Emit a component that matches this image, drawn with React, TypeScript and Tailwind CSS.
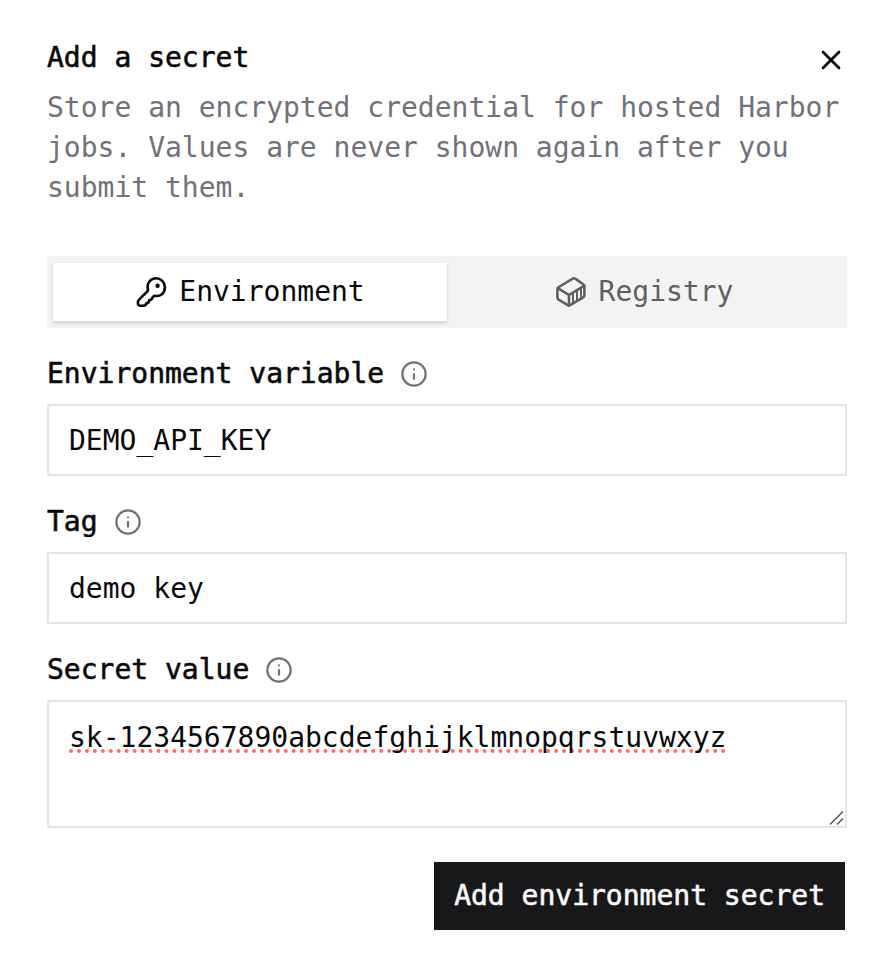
import { useState, type ReactNode } from "react";
import { Info, X } from "lucide-react";
import clsx from "clsx";

const controlClass =
  "block w-full border-2 border-[#e4e4e4] bg-white px-5 text-[28px] leading-10 text-[#09090b] focus:outline-none";

// DejaVu Sans Mono has no medium weight, a thin stroke stands in for it
const mediumClass = "font-medium [-webkit-text-stroke:thin]";

function KeyIcon() {
  return (
    <svg viewBox="0 0 32 32" className="size-8" fill="none" stroke="currentColor" strokeWidth="2.6" strokeLinecap="round" strokeLinejoin="round">
      <path d="M13 14 C11.3 7 15.8 2.3 21 2.3 A8.9 8.9 0 0 1 29.9 11.2 C29.9 17 25.5 21.2 19.3 19.7 L17.6 21.2 C16.9 24 15.8 24.3 14 24.4 C14 26.2 13.3 27 11.6 27.1 C11 29.2 10 29.8 8 29.8 H5.6 C3.8 29.8 2.9 28.8 2.9 27 C2.9 25.3 3.1 24.6 4.3 23.4 L12.4 15.4 Z" />
      <circle cx="22.6" cy="9.8" r="2.2" fill="currentColor" stroke="none" />
    </svg>
  );
}

function ContainerIcon() {
  return (
    <svg viewBox="0 0 32 32" className="size-8" fill="none" stroke="currentColor" strokeWidth="2.6" strokeLinecap="round" strokeLinejoin="round">
      <path d="M17.8 2.6 3.8 11 Q2.4 12 2.4 13.4 V21.6 Q2.4 23 3.6 23.7 L12.8 29.2 Q14 29.9 15.2 29.2 L28.2 21.4 Q29.4 20.7 29.4 19.3 V10.4 Q29.4 9 28.2 8.3 L20.2 2.6 Q19 2 17.8 2.6 Z" />
      <path d="M14 29.4 V19" />
      <path d="M2.8 12.2 14 19 29 9.8" />
      <path strokeWidth="2" d="M18 17V27M22 14.6V24.6M26 12.4V22.2" />
    </svg>
  );
}

interface FieldProps {
  id: string;
  label: string;
  help: string;
  children: ReactNode;
}

function Field({ id, label, help, children }: FieldProps) {
  return (
    <div className="flex flex-col gap-4">
      <div className="flex h-7 items-center gap-4">
        <label htmlFor={id} className={clsx(mediumClass, "leading-7")}>
          {label}
        </label>
        <button type="button" aria-label={help} className="text-[#71717a]">
          <Info size={28} strokeWidth={1.9} />
        </button>
      </div>
      {children}
    </div>
  );
}

interface TabProps {
  active: boolean;
  icon: ReactNode;
  children: ReactNode;
  onClick: () => void;
}

function Tab({ active, icon, children, onClick }: TabProps) {
  return (
    <button
      type="button"
      role="tab"
      aria-selected={active}
      onClick={onClick}
      className={clsx(
        "flex flex-1 items-center justify-center gap-3",
        active ? "bg-white text-[#09090b] shadow-[0_2px_4px_rgba(0,0,0,0.15)]" : "text-[#5f5f62]"
      )}
    >
      {icon}
      {children}
    </button>
  );
}

export default function App() {
  const [tab, setTab] = useState("environment");
  const [name, setName] = useState("DEMO_API_KEY");
  const [tag, setTag] = useState("demo key");
  const [value, setValue] = useState("sk-1234567890abcdefghijklmnopqrstuvwxyz");

  return (
    <div className="min-h-screen bg-white pt-11 pr-[43px] pb-12 pl-[47px] font-['DejaVu_Sans_Mono',monospace] text-[28px] leading-10 text-[#09090b]">
      <header className="flex flex-col gap-4">
        <div className="flex h-7 items-start justify-between">
          <h1 className={clsx(mediumClass, "leading-7")}>Add a secret</h1>
          <button type="button" aria-label="Close" className="text-black">
            <X size={32} />
          </button>
        </div>
        <p className="text-[#71717a]">
          Store an encrypted credential for hosted Harbor jobs. Values are never shown again after
          you submit them.
        </p>
      </header>

      <div role="tablist" className="mt-12 flex h-[72px] bg-[#f3f3f3] px-[6px] py-[7px]">
        <Tab
          active={tab === "environment"}
          onClick={() => setTab("environment")}
          icon={<KeyIcon />}
        >
          Environment
        </Tab>
        <Tab
          active={tab === "registry"}
          onClick={() => setTab("registry")}
          icon={<ContainerIcon />}
        >
          Registry
        </Tab>
      </div>

      <form className="mt-8 flex flex-col gap-8" onSubmit={(e) => e.preventDefault()}>
        <Field id="name" label="Environment variable" help="About environment variables">
          <input
            id="name"
            className={clsx(controlClass, "h-[72px]")}
            value={name}
            onChange={(e) => setName(e.target.value)}
          />
        </Field>
        <Field id="tag" label="Tag" help="About tags">
          <input
            id="tag"
            className={clsx(controlClass, "h-[72px]")}
            value={tag}
            onChange={(e) => setTag(e.target.value)}
          />
        </Field>
        <Field id="value" label="Secret value" help="About secret values">
          <div className="relative">
            <textarea
              id="value"
              spellCheck={false}
              className={clsx(
                controlClass,
                "h-32 resize-y py-4 underline decoration-[#ff6b66] decoration-dotted decoration-4 underline-offset-2 [text-decoration-skip-ink:none] [&::-webkit-resizer]:bg-transparent"
              )}
              value={value}
              onChange={(e) => setValue(e.target.value)}
            />
            <svg
              viewBox="0 0 16 16"
              className="pointer-events-none absolute right-[2px] bottom-[2px] size-4 text-[#555]"
              fill="none"
              stroke="currentColor"
              strokeWidth="1.5"
            >
              <path d="M1 14.5 14 1.5M8 14.5l6-6" />
            </svg>
          </div>
        </Field>
        <div className="flex justify-end p-[2px]">
          <button
            type="submit"
            className={clsx(mediumClass, "h-[68px] bg-[#18181b] px-5 text-[#fafafa]")}
          >
            Add environment secret
          </button>
        </div>
      </form>
    </div>
  );
}
